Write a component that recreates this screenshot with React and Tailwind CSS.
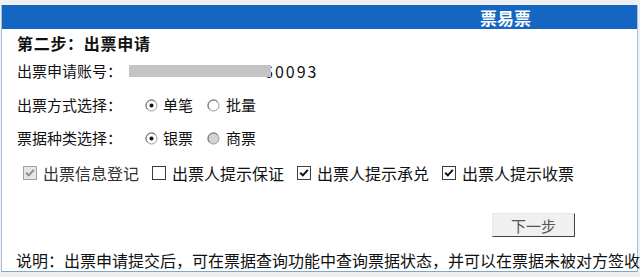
import React from 'react';

const Radio = ({ checked, disabled }) => (
    <svg width="13" height="13" viewBox="0 0 13 13" className="shrink-0">
        <circle cx="6.5" cy="6.5" r="5.5" fill={disabled ? '#d4d4d4' : '#ffffff'} stroke="#9a9a9a" strokeWidth="1" />
        <path d="M2.6 10.4 A5.5 5.5 0 0 1 10.4 2.6" fill="none" stroke="#6e6e6e" strokeWidth="1" />
        {checked && <circle cx="6.5" cy="6.5" r="2" fill="#111" />}
    </svg>
);

const Checkbox = ({ checked, disabled }) => (
    <svg width="14" height="14" viewBox="0 0 14 14" className="shrink-0">
        <rect x="0.5" y="0.5" width="13" height="13" fill={disabled ? '#e6e6e6' : '#ffffff'} stroke={disabled ? '#a0a0a0' : '#3c3c3c'} strokeWidth="1" />
        {checked && (
            <path d="M3.2 6.8 L5.8 9.4 L10.8 3.8" fill="none" stroke={disabled ? '#8c8c8c' : '#111'} strokeWidth="2" />
        )}
    </svg>
);

const checks = [
    { label: '出票信息登记', checked: true, disabled: true },
    { label: '出票人提示保证', checked: false },
    { label: '出票人提示承兑', checked: true },
    { label: '出票人提示收票', checked: true },
];

export default function App() {
    return (
        <div
            className="w-[640px] h-[277px] bg-[#eef0f4] pl-[1px] pr-[2px] pt-[5px] pb-[5px] overflow-hidden"
            style={{ fontFamily: '"Noto Sans CJK SC", "Liberation Sans", sans-serif' }}
        >
            <div className="h-full bg-white border-x border-b border-x-[#a9bfd6] border-b-[#7fa6cf] flex flex-col text-[#111]">
                {/* header bar */}
                <div className="h-[24px] bg-[#1466c2] flex items-center pl-[478px] shrink-0">
                    <span className="text-white font-bold text-[17px] leading-none">票易票</span>
                </div>

                <div className="pl-[15px] flex flex-col">
                    <div className="mt-[4px] h-[20px] flex items-center font-bold text-[16px] tracking-[0.7px]">第二步：出票申请</div>

                    <div className="mt-[8px] h-[20px] flex items-center text-[15px]">
                        <span className="w-[112px]">出票申请账号：</span>
                        <div className="w-[142px] h-[12px] bg-[#c4c4c4] relative z-10"></div>
                        <span className="ml-[-7px] text-[16px] tracking-[2px]">60093</span>
                    </div>

                    <div className="mt-[14px] h-[20px] flex items-center text-[15px]">
                        <span className="w-[128px]">出票方式选择：</span>
                        <Radio checked />
                        <span className="ml-[5px]">单笔</span>
                        <span className="ml-[14px]"><Radio /></span>
                        <span className="ml-[6px]">批量</span>
                    </div>

                    <div className="mt-[13px] h-[20px] flex items-center text-[15px]">
                        <span className="w-[128px]">票据种类选择：</span>
                        <Radio checked />
                        <span className="ml-[5px]">银票</span>
                        <span className="ml-[14px]"><Radio disabled /></span>
                        <span className="ml-[6px]">商票</span>
                    </div>

                    <div className="mt-[15px] h-[20px] flex items-center text-[16px] pl-[6px] gap-[13px]">
                        {checks.map((c) => (
                            <div key={c.label} className="flex items-center gap-[6px]">
                                <Checkbox checked={c.checked} disabled={c.disabled} />
                                <span className={c.disabled ? 'text-[#333]' : ''}>{c.label}</span>
                            </div>
                        ))}
                    </div>
                </div>

                <div className="mt-[30px] flex justify-end pr-[62px]">
                    <button className="w-[83px] h-[24px] bg-[#f0f0f0] border border-t-[#e8e8e8] border-l-[#e8e8e8] border-r-[#404040] border-b-[#404040] text-[#555] text-[15px] leading-none">
                        下一步
                    </button>
                </div>

                <div className="mt-[13px] pl-[14px] h-[20px] flex items-center text-[16px] whitespace-nowrap">
                    说明：出票申请提交后，可在票据查询功能中查询票据状态，并可以在票据未被对方签收
                </div>
            </div>
        </div>
    );
}
